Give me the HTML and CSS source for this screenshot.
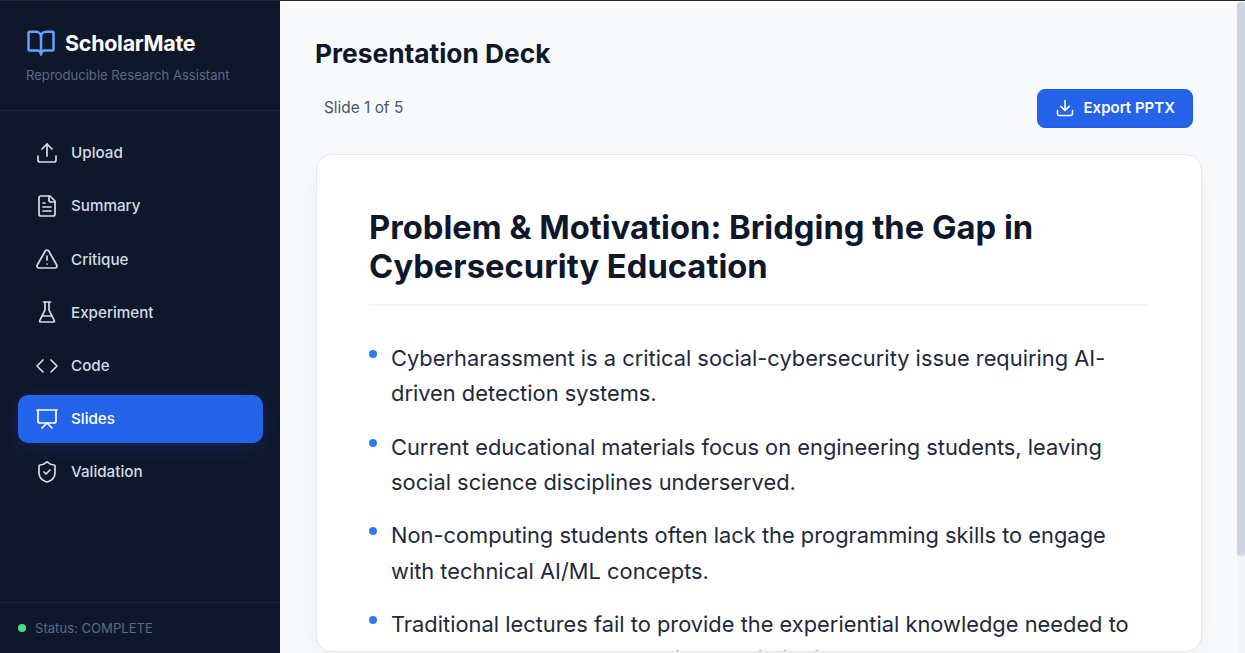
FILE: index.html
```html
<!DOCTYPE html>
<html lang="en">
<head>
<meta charset="utf-8">
<title>ScholarMate</title>
<link rel="stylesheet" href="styles.css">
</head>
<body>
<div class="app">
  <aside class="sidebar">
    <div class="brand">
      <div class="brand-row">
        <svg class="brand-icon" viewBox="0 0 24 24" width="30" height="30" fill="none" stroke="#60a5fa" stroke-width="2" stroke-linecap="round" stroke-linejoin="round"><path d="M12 7v14"/><path d="M3 18a1 1 0 0 1-1-1V4a1 1 0 0 1 1-1h5a4 4 0 0 1 4 4 4 4 0 0 1 4-4h5a1 1 0 0 1 1 1v13a1 1 0 0 1-1 1h-6a3 3 0 0 0-3 3 3 3 0 0 0-3-3z"/></svg>
        <span class="brand-name">ScholarMate</span>
      </div>
      <p class="brand-sub">Reproducible Research Assistant</p>
    </div>
    <nav class="nav">
      <a class="nav-item"><svg viewBox="0 0 24 24" class="ico"><path d="M12 3v12"/><path d="m17 8-5-5-5 5"/><path d="M21 15v4a2 2 0 0 1-2 2H5a2 2 0 0 1-2-2v-4"/></svg>Upload</a>
      <a class="nav-item"><svg viewBox="0 0 24 24" class="ico"><path d="M15 2H6a2 2 0 0 0-2 2v16a2 2 0 0 0 2 2h12a2 2 0 0 0 2-2V7z"/><path d="M14 2v4a2 2 0 0 0 2 2h4"/><path d="M10 9H8"/><path d="M16 13H8"/><path d="M16 17H8"/></svg>Summary</a>
      <a class="nav-item"><svg viewBox="0 0 24 24" class="ico"><path d="m21.73 18-8-14a2 2 0 0 0-3.48 0l-8 14A2 2 0 0 0 4 21h16a2 2 0 0 0 1.73-3"/><path d="M12 9v4"/><path d="M12 17h.01"/></svg>Critique</a>
      <a class="nav-item"><svg viewBox="0 0 24 24" class="ico"><path d="M10 2v7.527a2 2 0 0 1-.211.896L4.72 20.55a1 1 0 0 0 .9 1.45h12.76a1 1 0 0 0 .9-1.45l-5.069-10.127A2 2 0 0 1 14 9.527V2"/><path d="M8.5 2h7"/><path d="M7 16h10"/></svg>Experiment</a>
      <a class="nav-item"><svg viewBox="0 0 24 24" class="ico"><path d="m16 18 6-6-6-6"/><path d="m8 6-6 6 6 6"/></svg>Code</a>
      <a class="nav-item active"><svg viewBox="0 0 24 24" class="ico"><path d="M2 3h20"/><path d="M21 3v11a2 2 0 0 1-2 2H5a2 2 0 0 1-2-2V3"/><path d="m7 21 5-5 5 5"/></svg>Slides</a>
      <a class="nav-item"><svg viewBox="0 0 24 24" class="ico"><path d="M20 13c0 5-3.5 7.5-7.66 8.95a1 1 0 0 1-.67-.01C7.5 20.5 4 18 4 13V6a1 1 0 0 1 1-1c2 0 4.5-1.2 6.24-2.72a1.17 1.17 0 0 1 1.52 0C14.51 3.81 17 5 19 5a1 1 0 0 1 1 1z"/><path d="m9 12 2 2 4-4"/></svg>Validation</a>
    </nav>
    <div class="status"><span class="dot"></span>Status: COMPLETE</div>
  </aside>
  <main class="main">
    <h1 class="page-title">Presentation Deck</h1>
    <div class="toolbar">
      <span class="counter">Slide 1 of 5</span>
      <button class="export"><svg viewBox="0 0 24 24" class="ico-btn"><path d="M12 15V3"/><path d="M21 15v4a2 2 0 0 1-2 2H5a2 2 0 0 1-2-2v-4"/><path d="m7 10 5 5 5-5"/></svg>Export PPTX</button>
    </div>
    <section class="slide">
      <h2 class="slide-title">Problem &amp; Motivation: Bridging the Gap in Cybersecurity Education</h2>
      <ul class="points">
        <li>Cyberharassment is a critical social-cybersecurity issue requiring AI-driven detection systems.</li>
        <li>Current educational materials focus on engineering students, leaving social science disciplines underserved.</li>
        <li>Non-computing students often lack the programming skills to engage with technical AI/ML concepts.</li>
        <li>Traditional lectures fail to provide the experiential knowledge needed to understand AI model behavior and limitations.</li>
      </ul>
    </section>
    <div class="pager">
      <button class="page-btn">Previous</button>
      <button class="page-btn">Next</button>
    </div>
  </main>
  <div class="scroll-track"><div class="scroll-thumb"></div></div>
</div>
</body>
</html>
```
FILE: styles.css
```css
* { box-sizing: border-box; }
html, body { margin: 0; height: 100%; overflow: hidden; }
body { font-family: Inter, "Liberation Sans", sans-serif; background: #f8fafc; color: #0f172a; border-top: 1px solid #2b2b2b; }
.app { position: relative; display: flex; height: 652px; }
.sidebar { width: 280px; flex: none; background: #0f172a; display: flex; flex-direction: column; }
.brand { height: 110px; padding: 24px 24px 0 26px; border-bottom: 1px solid #1e293b; }
.brand-row { display: flex; align-items: center; gap: 9px; height: 34px; margin-top: 1px; }
.brand-icon { flex: none; }
.brand-name { font-size: 21.5px; font-weight: 700; letter-spacing: -0.3px; color: #fff; }
.brand-sub { margin: 7px 0 0; font-size: 13.1px; line-height: 16px; color: #5b6b82; }
.nav { flex: 1; padding: 17.8px 17px 0 18px; display: flex; flex-direction: column; gap: 5.2px; }
.nav-item { display: flex; align-items: center; gap: 12px; height: 48px; padding: 0 17px; border-radius: 10px; font-size: 15.2px; font-weight: 500; color: #d3dce8; }
.nav-item.active { background: #2563eb; color: #fff; box-shadow: 0 4px 20px rgba(37, 99, 235, 0.2); }
.ico { width: 24px; height: 24px; flex: none; fill: none; stroke: currentColor; stroke-width: 1.7; stroke-linecap: round; stroke-linejoin: round; }
.status { height: 51px; border-top: 1px solid #1e293b; padding-left: 18px; display: flex; align-items: center; gap: 9px; font-size: 13.1px; color: #5b6b82; }
.dot { width: 8px; height: 8px; border-radius: 50%; background: #4ade80; }
.main { flex: 1; overflow-y: auto; scrollbar-width: none; padding: 36px 43px 32px 36px; background: #f8fafc; }
.scroll-track { position: absolute; top: 0; right: 0; bottom: 0; width: 8px; padding-top: 1px; background: #f1f5f9; }
.scroll-thumb { height: 554px; background: #cbd5e1; border-radius: 4px; }
.page-title { margin: 0 0 0 -1px; font-size: 26.3px; line-height: 34px; font-weight: 700; color: #0f172a; }
.toolbar { display: flex; justify-content: space-between; align-items: center; margin-top: 18px; padding: 0 9px 0 8px; }
.counter { font-size: 15.4px; line-height: 34px; padding-bottom: 2px; color: #475569; }
.export { display: flex; align-items: center; gap: 9px; height: 39px; padding: 0 17px 2px 17px; background: #2563eb; border: 1px solid #1d5fe8; border-radius: 8px; color: #fff; font: 600 15px Inter, "Liberation Sans", sans-serif; }
.ico-btn { width: 20px; height: 20px; fill: none; stroke: currentColor; stroke-width: 1.9; stroke-linecap: round; stroke-linejoin: round; }
.slide { margin-top: 26px; aspect-ratio: 16 / 9; overflow: hidden; background: #fff; border: 1px solid #e2e8f0; border-radius: 16px; padding: 53px 52px 0; box-shadow: 0 10px 30px rgba(15, 23, 42, 0.05); }
.slide-title { margin: 0; padding-bottom: 18px; border-bottom: 2px solid #f1f5f9; font-size: 32.75px; line-height: 39px; font-weight: 700; color: #0f172a; }
.points { list-style: none; margin: 0; padding: 35px 0 0; }
.points li { position: relative; padding-left: 22px; margin-bottom: 18.3px; font-size: 21.85px; line-height: 35.2px; color: #1e293b; }
.points li::before { content: ""; position: absolute; left: 0; top: 9px; width: 8px; height: 8px; border-radius: 50%; background: #3079f3; }
.pager { display: flex; justify-content: center; gap: 16px; margin-top: 24px; }
.page-btn { height: 39px; padding: 0 18px; background: #fff; border: 1px solid #e2e8f0; border-radius: 8px; color: #475569; font: 500 14.4px Inter, "Liberation Sans", sans-serif; }
```
